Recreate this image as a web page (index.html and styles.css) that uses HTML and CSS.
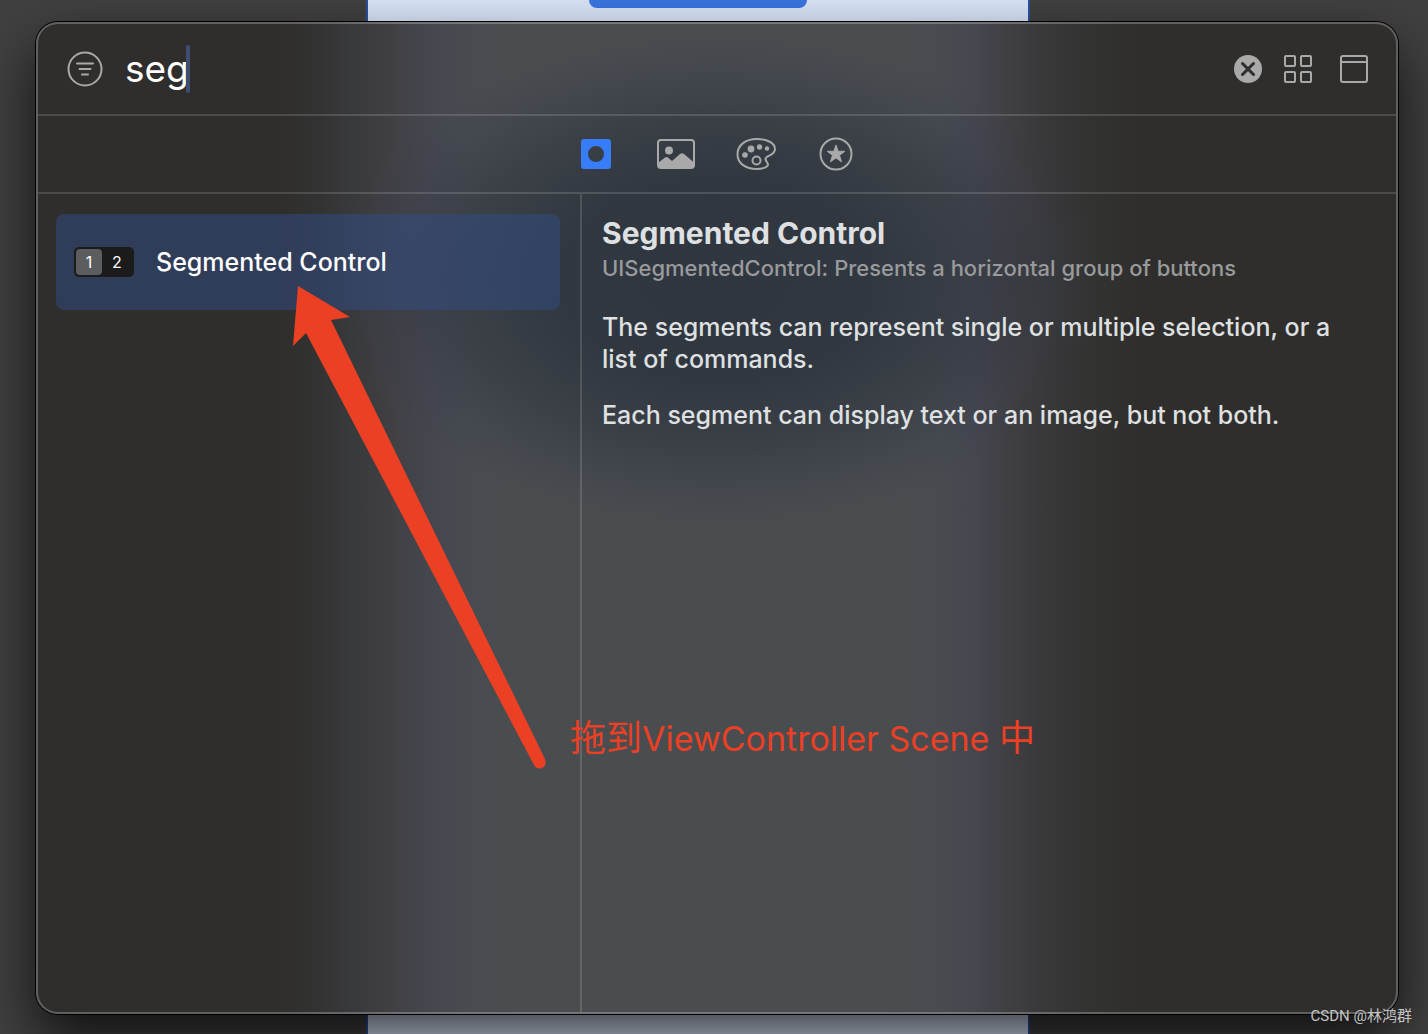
FILE: index.html
```html
<!DOCTYPE html>
<html lang="zh-Hans">
<head>
<meta charset="UTF-8">
<title>Library - Segmented Control</title>
<link rel="stylesheet" href="styles.css">
</head>
<body>
<!-- storyboard canvas behind the library -->
<div class="canvas"><div class="canvas-button"></div></div>

<main class="library">
  <header class="search-bar">
    <button class="icon-button" type="button" aria-label="Filter">
      <svg width="36" height="36" viewBox="0 0 36 36" fill="none" stroke="currentColor" stroke-width="2" stroke-linecap="round">
        <circle cx="18" cy="18" r="16.5"/>
        <path d="M10 12.500h16M12.500 18h11M15 23.500h6"/>
      </svg>
    </button>
    <div class="search-field">
      <input class="search-input" type="text" value="seg" aria-label="Search objects">
      <span class="caret"></span>
    </div>
    <button class="icon-button" type="button" aria-label="Clear">
      <svg width="28" height="28" viewBox="0 0 28 28">
        <circle cx="14" cy="14" r="14" fill="currentColor"/>
        <path d="M8.500 8.500l11 11M19.500 8.500l-11 11" stroke="#2f2e2c" stroke-width="3" stroke-linecap="round"/>
      </svg>
    </button>
    <button class="icon-button" type="button" aria-label="Grid view">
      <svg width="28" height="28" viewBox="0 0 28 28" fill="none" stroke="currentColor" stroke-width="2">
        <rect x="1" y="1" width="10" height="10" rx="1"/>
        <rect x="17" y="1" width="10" height="10" rx="1"/>
        <rect x="1" y="17" width="10" height="10" rx="1"/>
        <rect x="17" y="17" width="10" height="10" rx="1"/>
      </svg>
    </button>
    <button class="icon-button icon-details" type="button" aria-label="Hide details">
      <svg width="28" height="28" viewBox="0 0 28 28" fill="none" stroke="currentColor" stroke-width="2">
        <rect x="1" y="1" width="26" height="26" rx="2"/>
        <path d="M1 7h26"/>
      </svg>
    </button>
  </header>

  <nav class="tabs">
    <button class="tab tab-active" type="button" aria-label="Objects">
      <svg width="30" height="30" viewBox="0 0 30 30">
        <path fill="currentColor" fill-rule="evenodd" d="M3 0h24a3 3 0 0 1 3 3v24a3 3 0 0 1-3 3H3a3 3 0 0 1-3-3V3a3 3 0 0 1 3-3zM15 7a8 8 0 1 0 0 16a8 8 0 0 0 0-16z"/>
      </svg>
    </button>
    <button class="tab" type="button" aria-label="Media">
      <svg width="40" height="30" viewBox="0 0 40 30">
        <rect x="2" y="1" width="36" height="28" rx="3" fill="none" stroke="currentColor" stroke-width="2"/>
        <circle cx="13" cy="11.500" r="4" fill="currentColor"/>
        <path fill="currentColor" d="M2 24l7-5.500q1.500-1 3 0l4 3.500l8-7q2-1.500 4 0l10 8.500V27a2 2 0 0 1-2 2H4a2 2 0 0 1-2-2z"/>
      </svg>
    </button>
    <button class="tab" type="button" aria-label="Colors">
      <svg width="40" height="34" viewBox="0 0 40 34" fill="none" stroke="currentColor" stroke-width="2">
        <path d="M21 2C9 2 1.500 8.500 1.500 17.500C1.500 26.500 10 32 20.500 32C27 32 32 30 32 27.500C32 25.500 29.500 24.500 29.500 22C29.500 18 39 19 39 12C39 6 31 2 21 2z"/>
        <g fill="currentColor" stroke="none">
          <circle cx="9" cy="18" r="2.800"/>
          <circle cx="15" cy="12" r="3.400"/>
          <circle cx="23.500" cy="10" r="2.700"/>
          <circle cx="31" cy="11.500" r="2.200"/>
        </g>
        <circle cx="20.500" cy="23.500" r="4"/>
      </svg>
    </button>
    <button class="tab" type="button" aria-label="Symbols">
      <svg width="34" height="34" viewBox="0 0 34 34">
        <circle cx="17" cy="17" r="15.500" fill="none" stroke="currentColor" stroke-width="2"/>
        <path fill="currentColor" stroke="currentColor" stroke-linejoin="round" d="M17 8l2.200 6.300h6.600l-5.300 4l2 6.500L17 20.900l-5.500 3.900l2-6.500l-5.300-4h6.600z"/>
      </svg>
    </button>
  </nav>

  <div class="content">
    <ul class="results">
      <li>
        <a class="result" href="#detail">
          <span class="segments"><span class="segment segment-on">1</span><span class="segment">2</span></span>
          <span>Segmented Control</span>
        </a>
      </li>
    </ul>
    <article class="detail" id="detail">
      <h1>Segmented Control</h1>
      <p class="summary">UISegmentedControl: Presents a horizontal group of buttons</p>
      <p>The segments can represent single or multiple selection, or a list of commands.</p>
      <p>Each segment can display text or an image, but not both.</p>
    </article>
  </div>
</main>

<!-- annotation over the window -->
<svg class="arrow" width="260" height="490" viewBox="0 0 260 490">
  <path fill="#eb4024" d="M8 0L60 31L41 34L255 473Q257 480 252 482Q247 484 244 479L16 47L3 60z"/>
</svg>
<p class="note">拖到<span class="note-latin">ViewController Scene </span>中</p>
<p class="watermark">CSDN @林鸿群</p>
</body>
</html>
```
FILE: styles.css
```css
* {
  box-sizing: border-box;
}
body {
  position: relative;
  display: flex;
  min-height: 100vh;
  margin: 0;
  padding: 22px 30px 20px 36px;
  overflow: hidden;
  background-color: #404040;
  color: #dfe0e1;
  font-family: Inter, "Noto Sans CJK SC", sans-serif;
}
/* storyboard canvas */
.canvas {
  position: absolute;
  top: 0;
  bottom: 0;
  left: calc(50% - 348px);
  width: 664px;
  border: solid #2b50a0;
  border-width: 0 2px;
  background-color: #d9e4f8;
}
.canvas-button {
  width: 218px;
  height: 8px;
  margin: 0 auto;
  border-radius: 0 0 8px 8px;
  background-color: #3a76e0;
}
/* library window */
.library {
  position: relative;
  display: flex;
  flex: 1;
  flex-direction: column;
  min-width: 0;
  border: 2px solid rgba(255, 255, 255, 0.24);
  border-radius: 22px;
  background:
    radial-gradient(ellipse 28% 25% at 50% 26%, rgba(43, 50, 60, 0.85) 0%, rgba(43, 50, 60, 0.8) 40%, rgba(46, 52, 63, 0.5) 68%, rgba(58, 62, 76, 0.3) 86%, rgba(64, 67, 82, 0) 100%),
    linear-gradient(to right, #2f2e2c 18%, #333333 21%, #38393b 23%, #404044 26%, #45474f 29%, #484c50 32%, #494d4f 35%, #494d4f 62%, #484c50 66%, #45474f 69%, #3e3d40 72%, #363637 75%, #333332 77%, #2f2e2c 81%);
  background-origin: border-box;
  box-shadow: 0 0 0 1px #000, 0 26px 56px rgba(0, 0, 0, 0.74);
}
.search-bar {
  display: flex;
  align-items: center;
  gap: 22px;
  height: 92px;
  padding: 0 28px 0 29px;
  border-bottom: 2px solid rgba(255, 255, 255, 0.14);
}
button {
  padding: 0;
  border: none;
  background: none;
  color: #a9a9a9;
}
.icon-button,
.tab {
  display: flex;
  align-items: center;
  justify-content: center;
}
.icon-details {
  margin-left: 6px;
}
.search-field {
  position: relative;
  flex: 1;
}
.search-input {
  width: 100%;
  padding: 0;
  border: none;
  outline: none;
  background: none;
  color: #fff;
  font: 37px/48px Inter, sans-serif;
}
.caret {
  position: absolute;
  top: 0;
  left: 61px;
  width: 4px;
  height: 48px;
  border-radius: 2px;
  background-color: #3f4d70;
}
.tabs {
  display: flex;
  justify-content: center;
  gap: 40px;
  height: 78px;
  padding-right: 2px;
  border-bottom: 2px solid rgba(255, 255, 255, 0.14);
}
.tab {
  width: 40px;
}
.tab-active {
  color: #377cf8;
}
.content {
  display: grid;
  flex: 1;
  grid-template-columns: 544px 1fr;
}
.results {
  margin: 0;
  padding: 20px 20px 20px 18px;
  border-right: 2px solid rgba(255, 255, 255, 0.14);
  list-style: none;
}
.result {
  display: flex;
  align-items: center;
  gap: 22px;
  height: 96px;
  padding: 0 18px;
  border-radius: 8px;
  background-color: rgba(50, 76, 134, 0.5);
  color: #fff;
  font-size: 25px;
  font-weight: 500;
  text-decoration: none;
}
.segments {
  display: flex;
  gap: 2px;
  width: 60px;
  height: 30px;
  padding: 2px 4px 2px 2px;
  border-radius: 5px;
  background-color: #1b1b1b;
  font-size: 16px;
  font-weight: 400;
}
.segment {
  display: flex;
  flex: 1;
  align-items: center;
  justify-content: center;
  border-radius: 4px;
}
.segment-on {
  background-color: #5c5d5e;
}
.detail {
  padding: 19px 40px 20px 20px;
}
.detail h1 {
  margin: 0;
  font-size: 30px;
  font-weight: 700;
  line-height: 40px;
}
.detail p {
  margin: 0 0 24px;
  font-size: 25px;
  font-weight: 500;
  line-height: 32px;
}
.detail .summary {
  margin-bottom: 28px;
  color: #989a9c;
  font-size: 22px;
  line-height: 30px;
}
/* annotation */
.arrow {
  position: absolute;
  top: 286px;
  left: 290px;
}
.note {
  position: absolute;
  top: 714px;
  left: 570px;
  margin: 0;
  color: #eb4024;
  font-size: 36px;
  line-height: 48px;
  white-space: nowrap;
}
.note-latin {
  font-size: 34px;
}
.watermark {
  position: absolute;
  right: 16px;
  bottom: 8px;
  margin: 0;
  color: #c4c4c4;
  font: 15px/20px Roboto, "Noto Sans CJK SC", sans-serif;
}
```
